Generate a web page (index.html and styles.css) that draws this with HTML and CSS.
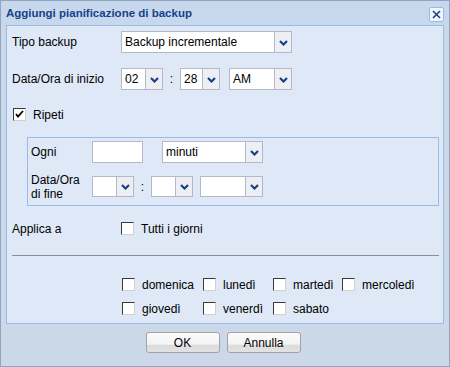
FILE: index.html
```html
<!DOCTYPE html>
<html lang="it">
<head>
    <meta charset="UTF-8">
    <title>Aggiungi pianificazione di backup</title>
    <link rel="stylesheet" href="styles.css">
</head>
<body>

    <div class="finestra">
        <div class="titolo">
            <span class="titolo-testo">Aggiungi pianificazione di backup</span>
            <span class="chiudi">
                <svg width="9" height="9" viewBox="0 0 9 9"><path d="M1 1 L8 8 M8 1 L1 8" stroke="#15428b" stroke-width="1.6"/></svg>
            </span>
        </div>

        <div class="pannello">
            <div class="riga riga-tipo">
                <span class="etichetta">Tipo backup</span>
                <div class="combo w-tipo"><span class="valore">Backup incrementale</span><span class="freccia"></span></div>
            </div>

            <div class="riga riga-inizio">
                <span class="etichetta">Data/Ora di inizio</span>
                <div class="combo w-ora"><span class="valore">02</span><span class="freccia"></span></div>
                <span class="due-punti">:</span>
                <div class="combo w-min"><span class="valore">28</span><span class="freccia"></span></div>
                <div class="combo w-ampm"><span class="valore">AM</span><span class="freccia"></span></div>
            </div>

            <div class="riga riga-ripeti">
                <span class="check spuntato"></span>
                <span class="check-testo">Ripeti</span>
            </div>

            <div class="gruppo">
                <div class="riga riga-ogni">
                    <span class="etichetta-gruppo">Ogni</span>
                    <div class="campo"></div>
                    <div class="combo w-minuti"><span class="valore">minuti</span><span class="freccia"></span></div>
                </div>
                <div class="riga riga-fine">
                    <span class="etichetta-gruppo doppia">Data/Ora<br>di fine</span>
                    <div class="combo w-ora-fine"><span class="valore"></span><span class="freccia"></span></div>
                    <span class="due-punti stretto">:</span>
                    <div class="combo w-min-fine"><span class="valore"></span><span class="freccia"></span></div>
                    <div class="combo w-ampm-fine"><span class="valore"></span><span class="freccia"></span></div>
                </div>
            </div>

            <div class="riga riga-applica">
                <span class="etichetta">Applica a</span>
                <span class="check"></span>
                <span class="check-testo">Tutti i giorni</span>
            </div>

            <div class="separatore"></div>

            <div class="giorni">
                <label class="giorno"><span class="check"></span><span class="check-testo">domenica</span></label>
                <label class="giorno"><span class="check"></span><span class="check-testo">lunedì</span></label>
                <label class="giorno"><span class="check"></span><span class="check-testo">martedì</span></label>
                <label class="giorno"><span class="check"></span><span class="check-testo">mercoledì</span></label>
                <label class="giorno"><span class="check"></span><span class="check-testo">giovedì</span></label>
                <label class="giorno"><span class="check"></span><span class="check-testo">venerdì</span></label>
                <label class="giorno"><span class="check"></span><span class="check-testo">sabato</span></label>
            </div>
        </div>

        <div class="piede">
            <button class="bottone">OK</button>
            <button class="bottone">Annulla</button>
        </div>
    </div>

</body>
</html>
```

FILE: styles.css
```css
body {
    margin: 0;
    padding: 0;
    font-family: "Liberation Sans", Arial, sans-serif;
    font-size: 12px;
    color: #000;
}

.finestra {
    width: 450px;
    height: 367px;
    box-sizing: border-box;
    border: 1px solid #8ea5c3;
    background-color: #cbd8e8;
    display: flex;
    flex-direction: column;
}

/* Barra del titolo */
.titolo {
    height: 24px;
    display: flex;
    align-items: center;
    justify-content: space-between;
    padding: 0 5px 0 5px;
    background-color: #c8d8ec;
}

.titolo-testo {
    font-weight: bold;
    font-size: 11.5px;
    color: #15428b;
}

.chiudi {
    width: 13px;
    height: 13px;
    border: 1px solid #99bbe8;
    border-radius: 2px;
    background-color: #f2f6fb;
    display: flex;
    align-items: center;
    justify-content: center;
    margin-top: 2px;
}

/* Pannello centrale */
.pannello {
    margin: 0 5px;
    height: 299px;
    box-sizing: border-box;
    border: 1px solid #99bbe8;
    background-color: #dfe8f6;
    padding: 5px 4px 0 5px;
}

.riga {
    display: flex;
    align-items: center;
}

.etichetta {
    width: 109px;
    flex-shrink: 0;
}

.riga-tipo { height: 22px; }
.riga-inizio { height: 22px; margin-top: 15px; }
.riga-ripeti { height: 13px; margin-top: 18px; padding-left: 1px; }
.riga-applica { height: 13px; margin-top: 16px; }

.combo {
    height: 22px;
    box-sizing: border-box;
    border: 1px solid #b5b8c8;
    background-color: #fff;
    display: flex;
}

.combo .valore {
    flex: 1;
    padding-left: 3px;
    line-height: 20px;
    font-size: 12px;
}

.freccia {
    width: 16px;
    border-left: 1px solid #b5b8c8;
    background-color: #eeeff2;
    background-image: url("data:image/svg+xml;utf8,<svg xmlns='http://www.w3.org/2000/svg' width='9' height='6'><path d='M1 1 L4.5 4.5 L8 1' stroke='%2315428b' stroke-width='2.2' fill='none'/></svg>");
    background-repeat: no-repeat;
    background-position: center 8px;
}

.w-tipo { width: 171px; }
.w-ora { width: 42px; }
.w-min { width: 40px; }
.w-ampm { width: 63px; margin-left: 9px; }

.due-punti {
    width: 17px;
    text-align: center;
}

.due-punti.stretto { width: 17px; }

/* Caselle di controllo */
.check {
    width: 13px;
    height: 13px;
    box-sizing: border-box;
    border: 1px solid #3a3a3a;
    border-right-color: #d4d0c8;
    border-bottom-color: #d4d0c8;
    background-color: #fff;
    flex-shrink: 0;
    display: inline-block;
}

.check.spuntato {
    background-image: url("data:image/svg+xml;utf8,<svg xmlns='http://www.w3.org/2000/svg' width='11' height='11'><path d='M2 5 L4 7.5 L9 2' stroke='black' stroke-width='1.8' fill='none'/></svg>");
    background-repeat: no-repeat;
    background-position: center;
}

.check-testo {
    margin-left: 7px;
}

/* Gruppo ripetizione */
.gruppo {
    margin: 16px 0 0 15px;
    border: 1px solid #99bbe8;
    padding: 3px 0 8px 3px;
}

.etichetta-gruppo {
    width: 61px;
    flex-shrink: 0;
}

.etichetta-gruppo.doppia {
    line-height: 14px;
}

.riga-ogni { height: 22px; }
.riga-fine { height: 21px; margin-top: 13px; }

.campo {
    width: 51px;
    height: 22px;
    box-sizing: border-box;
    border: 1px solid #b5b8c8;
    background-color: #fff;
    margin-right: 19px;
}

.w-minuti { width: 101px; }
.w-ora-fine { width: 42px; height: 21px; }
.w-min-fine { width: 42px; height: 21px; }
.w-ampm-fine { width: 63px; height: 21px; margin-left: 7px; }

.riga-fine .freccia { background-position: center 7px; }

.separatore {
    margin: 20px 0 0 0;
    height: 1px;
    background-color: #8e8e8e;
}

/* Giorni della settimana */
.giorni {
    display: grid;
    grid-template-columns: 81px 70px 69px auto;
    row-gap: 11px;
    margin: 22px 0 0 110px;
}

.giorno {
    display: flex;
    align-items: center;
    height: 13px;
}

/* Piede con i bottoni */
.piede {
    flex: 1;
    display: flex;
    justify-content: center;
    align-items: flex-start;
    gap: 7px;
    padding: 8px 4px 0 0;
}

.bottone {
    width: 74px;
    height: 21px;
    border: 1px solid #a3a3a3;
    border-radius: 3px;
    background: linear-gradient(#fbfbfb 0%, #f3f3f3 60%, #dcdcdc 62%, #e2e2e2 100%);
    font-family: "Liberation Sans", Arial, sans-serif;
    font-size: 12px;
    color: #000;
    padding: 0;
}
```
